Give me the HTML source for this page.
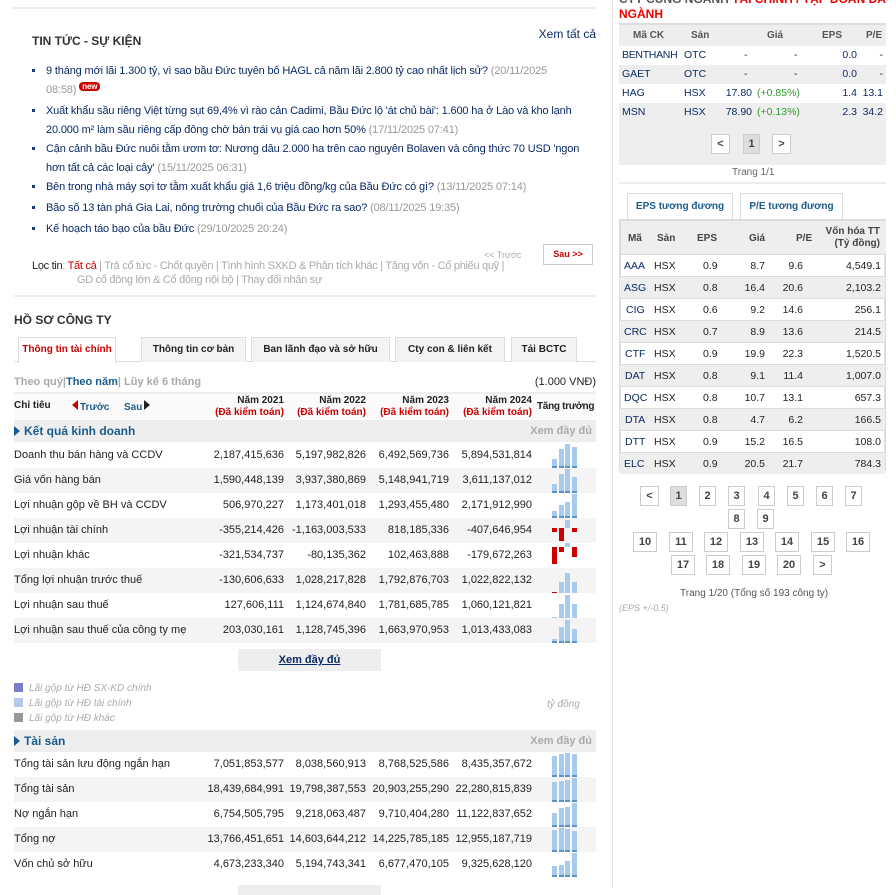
<!DOCTYPE html>
<html><head><meta charset="utf-8"><style>
*{margin:0;padding:0;box-sizing:border-box}
body{width:896px;height:887px;overflow:hidden;background:#fff;font-family:"Liberation Sans",Arial,sans-serif;font-size:11px;color:#222;position:relative}
.a{position:absolute;white-space:nowrap}
.news{position:absolute;left:46px;width:550px;font-size:11px;letter-spacing:-0.15px;line-height:19px;color:#0a2a66}
.news:before{content:"";position:absolute;left:-14px;top:7px;width:3px;height:3px;background:#1a3a7a}
.d{color:#999}
.row{position:absolute;left:14px;width:582px;height:25px;font-size:11px;line-height:25px;color:#222}
.row.g{background:#f4f4f4}
.row .n{position:absolute;text-align:right}
.n1{right:312px}.n2{right:230px}.n3{right:147px}.n4{right:64px}
.sp{position:absolute;left:538px;top:0;width:26px;height:25px}
.sp i{position:absolute;width:5px;background:#a6cbef;border-bottom:2px solid #5a93c7}
.sp i.r{background:#c00;border:0}
.tab{position:absolute;top:337px;height:25px;border:1px solid #ddd;border-bottom:0;background:#f3f3f3;font-weight:bold;font-size:10px;line-height:24px;text-align:center;color:#222;white-space:nowrap}
.sec{position:absolute;left:14px;width:582px;height:22px;background:#eee;font-weight:bold;font-size:12px;line-height:22px;color:#1b5c8e}
.sec b.t{position:absolute;left:0;top:6px;width:0;height:0;border-top:5px solid transparent;border-bottom:5px solid transparent;border-left:6px solid #1b5c8e}
.sec .x{position:absolute;right:4px;top:0;color:#aaa;font-weight:bold;font-size:11px}
.rt{position:absolute;left:619px;width:267px;font-size:10.5px;height:19px;line-height:19px}
.rt.g{background:#eee}
.rt span{position:absolute}
.r2{position:absolute;left:620px;width:265px;height:22px;line-height:22px;font-size:10.5px;border-top:1px solid #ddd}
.r2.g{background:#eee}
.r2 span{position:absolute}
.pb{position:absolute;height:20px;border:1px solid #ccc;background:#fff;font-weight:bold;font-size:11px;line-height:18px;text-align:center;color:#444}
.pb.on{background:#ddd}
.leg{position:absolute;left:14px;font-style:italic;color:#aaa;font-size:10px;line-height:12px}
.leg i{display:inline-block;width:9px;height:9px;margin-right:6px;vertical-align:-1px}
</style></head><body>

<div class="a" style="left:12px;top:7px;width:584px;height:2px;background:#eee"></div>
<div class="a" style="left:32px;top:34px;font-size:12px;font-weight:bold;color:#333">TIN TỨC - SỰ KIỆN</div>
<div class="a" style="right:300px;top:27px;font-size:12px;color:#0a2a66">Xem tất cả</div>

<div class="news" style="top:62px">9 tháng mới lãi 1.300 tỷ, vì sao bầu Đức tuyên bố HAGL cả năm lãi 2.800 tỷ cao nhất lịch sử? <span class="d">(20/11/2025<br>08:58)</span> <span style="display:inline-block;background:#c00;color:#fff;font-size:8px;font-weight:bold;line-height:9px;padding:0 3px;border-radius:4px;vertical-align:4px">new</span></div>
<div class="news" style="top:102px">Xuất khẩu sầu riêng Việt từng sụt 69,4% vì rào cản Cadimi, Bầu Đức lộ 'át chủ bài': 1.600 ha ở Lào và kho lạnh 20.000 m² làm sầu riêng cấp đông chờ bán trái vụ giá cao hơn 50% <span class="d">(17/11/2025 07:41)</span></div>
<div class="news" style="top:140px">Cận cảnh bầu Đức nuôi tằm ươm tơ: Nương dâu 2.000 ha trên cao nguyên Bolaven và công thức 70 USD 'ngon hơn tất cả các loại cây' <span class="d">(15/11/2025 06:31)</span></div>
<div class="news" style="top:178px">Bên trong nhà máy sợi tơ tằm xuất khẩu giá 1,6 triệu đồng/kg của Bầu Đức có gì? <span class="d">(13/11/2025 07:14)</span></div>
<div class="news" style="top:199px">Bão số 13 tàn phá Gia Lai, nông trường chuối của Bầu Đức ra sao? <span class="d">(08/11/2025 19:35)</span></div>
<div class="news" style="top:220px">Kế hoạch táo bạo của bầu Đức <span class="d">(29/10/2025 20:24)</span></div>

<div class="a" style="left:484px;top:250px;font-size:9px;color:#aaa">&lt;&lt; Trước</div>
<div class="a" style="left:543px;top:244px;width:50px;height:21px;border:1px solid #ccc;color:#c00;font-weight:bold;font-size:9px;line-height:19px;text-align:center">Sau &gt;&gt;</div>
<div class="a" style="left:32px;top:259px;font-size:11px;letter-spacing:-0.3px;line-height:14px;color:#aaa"><span style="color:#222">Lọc tin</span>: <span style="color:#c00">Tất cả</span> | Trả cổ tức - Chốt quyền | Tình hình SXKD &amp; Phân tích khác | Tăng vốn - Cổ phiếu quỹ |</div>
<div class="a" style="left:77px;top:273px;font-size:11px;letter-spacing:-0.3px;line-height:14px;color:#aaa">GD cổ đông lớn &amp; Cổ đông nội bộ | Thay đổi nhân sự</div>
<div class="a" style="left:14px;top:295px;width:582px;height:2px;background:#eee"></div>

<div class="a" style="left:14px;top:313px;font-size:12px;font-weight:bold;color:#333">HỒ SƠ CÔNG TY</div>
<div class="a" style="left:14px;top:361px;width:582px;height:1px;background:#ddd"></div>
<div class="tab" style="left:18px;width:98px;background:#fff;color:#c00;height:26px">Thông tin tài chính</div>
<div class="tab" style="left:141px;width:105px">Thông tin cơ bản</div>
<div class="tab" style="left:251px;width:139px">Ban lãnh đạo và sở hữu</div>
<div class="tab" style="left:395px;width:110px">Cty con &amp; liên kết</div>
<div class="tab" style="left:511px;width:66px">Tải BCTC</div>

<div class="a" style="left:14px;top:376px;font-size:11px;font-weight:bold;color:#aaa">Theo quý|<span style="color:#1b5c8e">Theo năm</span>| Lũy kế 6 tháng</div>
<div class="a" style="right:300px;top:376px;font-size:11px;color:#222">(1.000 VNĐ)</div>
<div class="a" style="left:14px;top:392px;width:582px;height:2px;background:#eee"></div>
<div class="a" style="left:14px;top:394px;width:582px;height:25px;background:#fafafa"></div>
<div class="a" style="left:14px;top:400px;font-weight:bold;font-size:10px">Chỉ tiêu</div>
<div class="a" style="left:72px;top:400px;width:0;height:0;border-top:5px solid transparent;border-bottom:5px solid transparent;border-right:6px solid #c00"></div>
<div class="a" style="left:80px;top:402px;font-weight:bold;font-size:10px;color:#1b5c8e">Trước</div>
<div class="a" style="left:124px;top:402px;font-weight:bold;font-size:10px;color:#1b5c8e">Sau</div>
<div class="a" style="left:144px;top:400px;width:0;height:0;border-top:5px solid transparent;border-bottom:5px solid transparent;border-left:6px solid #222"></div>
<div class="a" style="right:612px;top:395px;font-weight:bold;font-size:10px;text-align:right;line-height:12px">Năm 2021<br><span style="color:#c00">(Đã kiểm toán)</span></div>
<div class="a" style="right:530px;top:395px;font-weight:bold;font-size:10px;text-align:right;line-height:12px">Năm 2022<br><span style="color:#c00">(Đã kiểm toán)</span></div>
<div class="a" style="right:447px;top:395px;font-weight:bold;font-size:10px;text-align:right;line-height:12px">Năm 2023<br><span style="color:#c00">(Đã kiểm toán)</span></div>
<div class="a" style="right:364px;top:395px;font-weight:bold;font-size:10px;text-align:right;line-height:12px">Năm 2024<br><span style="color:#c00">(Đã kiểm toán)</span></div>
<div class="a" style="left:537px;top:401px;font-weight:bold;font-size:10px;letter-spacing:-0.3px">Tăng trưởng</div>

<div class="sec" style="top:420px"><b class="t"></b><span style="position:absolute;left:10px">Kết quả kinh doanh</span><span class="x">Xem đầy đủ</span></div>

<div class="row" style="top:443px">Doanh thu bán hàng và CCDV<span class="n n1">2,187,415,636</span><span class="n n2">5,197,982,826</span><span class="n n3">6,492,569,736</span><span class="n n4">5,894,531,814</span><span class="sp"><i style="left:0;bottom:0;height:9px"></i><i style="left:7px;bottom:0;height:19px"></i><i style="left:13px;bottom:0;height:24px"></i><i style="left:20px;bottom:0;height:21px"></i></span></div>
<div class="row g" style="top:468px">Giá vốn hàng bán<span class="n n1">1,590,448,139</span><span class="n n2">3,937,380,869</span><span class="n n3">5,148,941,719</span><span class="n n4">3,611,137,012</span><span class="sp"><i style="left:0;bottom:0;height:9px"></i><i style="left:7px;bottom:0;height:19px"></i><i style="left:13px;bottom:0;height:24px"></i><i style="left:20px;bottom:0;height:16px"></i></span></div>
<div class="row" style="top:493px">Lợi nhuận gộp về BH và CCDV<span class="n n1">506,970,227</span><span class="n n2">1,173,401,018</span><span class="n n3">1,293,455,480</span><span class="n n4">2,171,912,990</span><span class="sp"><i style="left:0;bottom:0;height:7px"></i><i style="left:7px;bottom:0;height:13px"></i><i style="left:13px;bottom:0;height:16px"></i><i style="left:20px;bottom:0;height:24px"></i></span></div>
<div class="row g" style="top:518px">Lợi nhuận tài chính<span class="n n1">-355,214,426</span><span class="n n2">-1,163,003,533</span><span class="n n3">818,185,336</span><span class="n n4">-407,646,954</span><span class="sp"><i class="r" style="left:0;top:10px;height:4px"></i><i class="r" style="left:7px;top:10px;height:13px"></i><i style="left:13px;top:2px;height:8px;border:0"></i><i class="r" style="left:20px;top:10px;height:4px"></i></span></div>
<div class="row" style="top:543px">Lợi nhuận khác<span class="n n1">-321,534,737</span><span class="n n2">-80,135,362</span><span class="n n3">102,463,888</span><span class="n n4">-179,672,263</span><span class="sp"><i class="r" style="left:0;top:4px;height:17px"></i><i class="r" style="left:7px;top:4px;height:5px"></i><i style="left:13px;top:0;height:4px;border:0"></i><i class="r" style="left:20px;top:4px;height:10px"></i></span></div>
<div class="row g" style="top:568px">Tổng lợi nhuận trước thuế<span class="n n1">-130,606,633</span><span class="n n2">1,028,217,828</span><span class="n n3">1,792,876,703</span><span class="n n4">1,022,822,132</span><span class="sp"><i class="r" style="left:0;bottom:0;height:1px"></i><i style="left:7px;bottom:0;height:11px;border:0"></i><i style="left:13px;bottom:0;height:20px;border:0"></i><i style="left:20px;bottom:0;height:11px;border:0"></i></span></div>
<div class="row" style="top:593px">Lợi nhuận sau thuế<span class="n n1">127,606,111</span><span class="n n2">1,124,674,840</span><span class="n n3">1,781,685,785</span><span class="n n4">1,060,121,821</span><span class="sp"><i style="left:0;bottom:0;height:1px;border:0"></i><i style="left:7px;bottom:0;height:14px;border:0"></i><i style="left:13px;bottom:0;height:23px;border:0"></i><i style="left:20px;bottom:0;height:14px;border:0"></i></span></div>
<div class="row g" style="top:618px">Lợi nhuận sau thuế của công ty mẹ<span class="n n1">203,030,161</span><span class="n n2">1,128,745,396</span><span class="n n3">1,663,970,953</span><span class="n n4">1,013,433,083</span><span class="sp"><i style="left:0;bottom:0;height:4px"></i><i style="left:7px;bottom:0;height:16px"></i><i style="left:13px;bottom:0;height:23px"></i><i style="left:20px;bottom:0;height:14px"></i></span></div>

<div class="a" style="left:238px;top:649px;width:143px;height:22px;background:#eee;text-align:center;line-height:22px;font-weight:bold;font-size:11px;color:#0a2a66;text-decoration:underline">Xem đầy đủ</div>

<div class="leg" style="top:683px"><i style="background:#7b7bc8"></i>Lãi gộp từ HĐ SX-KD chính</div>
<div class="leg" style="top:698px"><i style="background:#b7c9ea"></i>Lãi gộp từ HĐ tài chính</div>
<div class="leg" style="top:713px"><i style="background:#999"></i>Lãi gộp từ HĐ khác</div>
<div class="leg" style="left:547px;top:699px">tỷ đồng</div>

<div class="sec" style="top:730px"><b class="t"></b><span style="position:absolute;left:10px">Tài sản</span><span class="x">Xem đầy đủ</span></div>
<div class="row" style="top:752px">Tổng tài sản lưu động ngắn hạn<span class="n n1">7,051,853,577</span><span class="n n2">8,038,560,913</span><span class="n n3">8,768,525,586</span><span class="n n4">8,435,357,672</span><span class="sp"><i style="left:0;bottom:0;height:21px"></i><i style="left:7px;bottom:0;height:23px"></i><i style="left:13px;bottom:0;height:24px"></i><i style="left:20px;bottom:0;height:23px"></i></span></div>
<div class="row g" style="top:777px">Tổng tài sản<span class="n n1">18,439,684,991</span><span class="n n2">19,798,387,553</span><span class="n n3">20,903,255,290</span><span class="n n4">22,280,815,839</span><span class="sp"><i style="left:0;bottom:0;height:20px"></i><i style="left:7px;bottom:0;height:21px"></i><i style="left:13px;bottom:0;height:22px"></i><i style="left:20px;bottom:0;height:24px"></i></span></div>
<div class="row" style="top:802px">Nợ ngắn hạn<span class="n n1">6,754,505,795</span><span class="n n2">9,218,063,487</span><span class="n n3">9,710,404,280</span><span class="n n4">11,122,837,652</span><span class="sp"><i style="left:0;bottom:0;height:14px"></i><i style="left:7px;bottom:0;height:19px"></i><i style="left:13px;bottom:0;height:20px"></i><i style="left:20px;bottom:0;height:24px"></i></span></div>
<div class="row g" style="top:827px">Tổng nợ<span class="n n1">13,766,451,651</span><span class="n n2">14,603,644,212</span><span class="n n3">14,225,785,185</span><span class="n n4">12,955,187,719</span><span class="sp"><i style="left:0;bottom:0;height:22px"></i><i style="left:7px;bottom:0;height:24px"></i><i style="left:13px;bottom:0;height:23px"></i><i style="left:20px;bottom:0;height:21px"></i></span></div>
<div class="row" style="top:852px">Vốn chủ sở hữu<span class="n n1">4,673,233,340</span><span class="n n2">5,194,743,341</span><span class="n n3">6,677,470,105</span><span class="n n4">9,325,628,120</span><span class="sp"><i style="left:0;bottom:0;height:11px"></i><i style="left:7px;bottom:0;height:12px"></i><i style="left:13px;bottom:0;height:16px"></i><i style="left:20px;bottom:0;height:24px"></i></span></div>
<div class="a" style="left:238px;top:885px;width:143px;height:10px;background:#eee"></div>

<div class="a" style="left:612px;top:0;width:0;height:887px;border-left:1px dotted #ccc"></div>
<div class="a" style="left:619px;top:-8px;font-size:12px;font-weight:bold;line-height:15px;color:#555;white-space:normal;width:267px">CTY CÙNG NGÀNH <span style="color:#e00">TÀI CHÍNH / TẬP ĐOÀN ĐA NGÀNH</span></div>
<div class="a" style="left:619px;top:23px;width:267px;height:2px;background:#ddd"></div>
<div class="rt g" style="top:25px;height:21px;line-height:21px;font-weight:bold;color:#555;font-size:10px"><span style="left:14px">Mã CK</span><span style="left:72px">Sản</span><span style="left:148px">Giá</span><span style="left:203px">EPS</span><span style="left:247px">P/E</span></div>
<div class="rt" style="top:46px;color:#0a2a66"><span style="left:3px;letter-spacing:-0.3px">BENTHANH</span><span style="left:65px">OTC</span><span style="left:125px">-</span><span style="left:175px">-</span><span style="right:29px">0.0</span><span style="right:3px">-</span></div>
<div class="rt g" style="top:65px;color:#0a2a66"><span style="left:3px">GAET</span><span style="left:65px">OTC</span><span style="left:125px">-</span><span style="left:175px">-</span><span style="right:29px">0.0</span><span style="right:3px">-</span></div>
<div class="rt" style="top:84px;color:#0a2a66"><span style="left:3px">HAG</span><span style="left:65px">HSX</span><span style="right:134px">17.80</span><span style="left:138px;color:#393">(+0.85%)</span><span style="right:29px">1.4</span><span style="right:3px">13.1</span></div>
<div class="rt g" style="top:103px;color:#0a2a66"><span style="left:3px">MSN</span><span style="left:65px">HSX</span><span style="right:134px">78.90</span><span style="left:138px;color:#393">(+0.13%)</span><span style="right:29px">2.3</span><span style="right:3px">34.2</span></div>
<div class="a" style="left:619px;top:122px;width:267px;height:43px;background:#eee"></div>
<div class="pb" style="left:711px;top:134px;width:19px">&lt;</div>
<div class="pb on" style="left:743px;top:134px;width:17px">1</div>
<div class="pb" style="left:772px;top:134px;width:19px">&gt;</div>
<div class="a" style="left:732px;top:167px;color:#666;font-size:10px">Trang 1/1</div>
<div class="a" style="left:619px;top:182px;width:267px;height:2px;background:#eee"></div>
<div class="a" style="left:627px;top:193px;width:106px;height:26px;border:1px solid #ddd;border-bottom:0;text-align:center;line-height:26px;font-weight:bold;font-size:10px;color:#1b5c8e">EPS tương đương</div>
<div class="a" style="left:740px;top:193px;width:103px;height:26px;border:1px solid #ddd;border-bottom:0;text-align:center;line-height:26px;font-weight:bold;font-size:10px;color:#1b5c8e">P/E tương đương</div>
<div class="a" style="left:619px;top:219px;width:267px;height:252px;border:2px solid #ddd"></div>
<div class="a" style="left:621px;top:221px;width:265px;height:33px;background:#eee;font-weight:bold;font-size:10px;color:#444">
<span class="a" style="left:7px;top:12px">Mã</span><span class="a" style="left:36px;top:12px">Sản</span><span class="a" style="left:76px;top:12px">EPS</span><span class="a" style="left:128px;top:12px">Giá</span><span class="a" style="left:175px;top:12px">P/E</span><span class="a" style="right:6px;top:5px;text-align:right;line-height:12px">Vốn hóa TT<br>(Tỷ đồng)</span></div>

<div class="r2" style="top:254px"><span style="left:4px;color:#0a2a66">AAA</span><span style="left:34px">HSX</span><span style="left:83px">0.9</span><span style="right:120px">8.7</span><span style="right:82px">9.6</span><span style="right:4px">4,549.1</span></div>
<div class="r2 g" style="top:276px"><span style="left:4px;color:#0a2a66">ASG</span><span style="left:34px">HSX</span><span style="left:83px">0.8</span><span style="right:120px">16.4</span><span style="right:82px">20.6</span><span style="right:4px">2,103.2</span></div>
<div class="r2" style="top:298px"><span style="left:6px;color:#0a2a66">CIG</span><span style="left:34px">HSX</span><span style="left:83px">0.6</span><span style="right:120px">9.2</span><span style="right:82px">14.6</span><span style="right:4px">256.1</span></div>
<div class="r2 g" style="top:320px"><span style="left:4px;color:#0a2a66">CRC</span><span style="left:34px">HSX</span><span style="left:83px">0.7</span><span style="right:120px">8.9</span><span style="right:82px">13.6</span><span style="right:4px">214.5</span></div>
<div class="r2" style="top:342px"><span style="left:5px;color:#0a2a66">CTF</span><span style="left:34px">HSX</span><span style="left:83px">0.9</span><span style="right:120px">19.9</span><span style="right:82px">22.3</span><span style="right:4px">1,520.5</span></div>
<div class="r2 g" style="top:364px"><span style="left:5px;color:#0a2a66">DAT</span><span style="left:34px">HSX</span><span style="left:83px">0.8</span><span style="right:120px">9.1</span><span style="right:82px">11.4</span><span style="right:4px">1,007.0</span></div>
<div class="r2" style="top:386px"><span style="left:4px;color:#0a2a66">DQC</span><span style="left:34px">HSX</span><span style="left:83px">0.8</span><span style="right:120px">10.7</span><span style="right:82px">13.1</span><span style="right:4px">657.3</span></div>
<div class="r2 g" style="top:408px"><span style="left:5px;color:#0a2a66">DTA</span><span style="left:34px">HSX</span><span style="left:83px">0.8</span><span style="right:120px">4.7</span><span style="right:82px">6.2</span><span style="right:4px">166.5</span></div>
<div class="r2" style="top:430px"><span style="left:5px;color:#0a2a66">DTT</span><span style="left:34px">HSX</span><span style="left:83px">0.9</span><span style="right:120px">15.2</span><span style="right:82px">16.5</span><span style="right:4px">108.0</span></div>
<div class="r2 g" style="top:452px"><span style="left:4px;color:#0a2a66">ELC</span><span style="left:34px">HSX</span><span style="left:83px">0.9</span><span style="right:120px">20.5</span><span style="right:82px">21.7</span><span style="right:4px">784.3</span></div>

<div class="pb" style="left:640px;top:486px;width:19px">&lt;</div>
<div class="pb on" style="left:670px;top:486px;width:17px">1</div>
<div class="pb" style="left:699px;top:486px;width:17px">2</div>
<div class="pb" style="left:728px;top:486px;width:17px">3</div>
<div class="pb" style="left:758px;top:486px;width:17px">4</div>
<div class="pb" style="left:787px;top:486px;width:17px">5</div>
<div class="pb" style="left:816px;top:486px;width:17px">6</div>
<div class="pb" style="left:845px;top:486px;width:17px">7</div>
<div class="pb" style="left:728px;top:509px;width:17px">8</div>
<div class="pb" style="left:757px;top:509px;width:17px">9</div>
<div class="pb" style="left:633px;top:532px;width:24px">10</div>
<div class="pb" style="left:669px;top:532px;width:24px">11</div>
<div class="pb" style="left:704px;top:532px;width:24px">12</div>
<div class="pb" style="left:740px;top:532px;width:24px">13</div>
<div class="pb" style="left:775px;top:532px;width:24px">14</div>
<div class="pb" style="left:811px;top:532px;width:24px">15</div>
<div class="pb" style="left:846px;top:532px;width:24px">16</div>
<div class="pb" style="left:671px;top:555px;width:24px">17</div>
<div class="pb" style="left:706px;top:555px;width:24px">18</div>
<div class="pb" style="left:742px;top:555px;width:24px">19</div>
<div class="pb" style="left:777px;top:555px;width:24px">20</div>
<div class="pb" style="left:813px;top:555px;width:19px">&gt;</div>
<div class="a" style="left:680px;top:588px;color:#555;font-size:10px">Trang 1/20 (Tổng số 193 công ty)</div>
<div class="a" style="left:619px;top:603px;color:#aaa;font-size:9px;font-style:italic">(EPS +/-0.5)</div>
</body></html>
